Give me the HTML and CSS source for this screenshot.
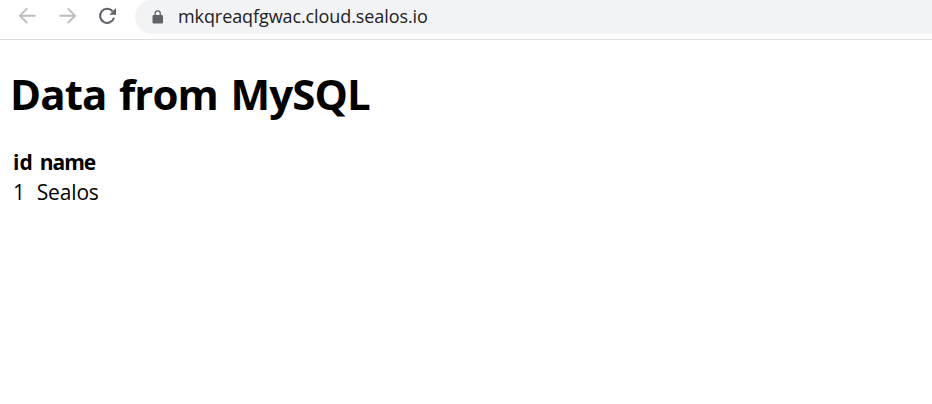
FILE: index.html
```html
<!DOCTYPE html>
<html lang="en">
<head>
<meta charset="utf-8">
<title>Data from MySQL</title>
<link rel="stylesheet" href="styles.css">
</head>
<body>
<header class="toolbar">
  <nav class="nav">
    <svg class="icon off" viewBox="0 0 20 20"><path d="M18.500 9.700H3M10.300 2.300L2.900 9.700l7.400 7.400"/></svg>
    <svg class="icon off" viewBox="0 0 20 20"><path d="M2.500 9.700H18M10.700 2.300l7.400 7.400-7.400 7.400"/></svg>
    <svg class="icon reload" viewBox="0 0 20 20"><path class="arc" d="M15.600 5.200A7.100 7.100 0 1 0 17 11.800"/><path class="tip" d="M19 2v6.700h-6.700z"/></svg>
  </nav>
  <div class="address">
    <svg class="lock" viewBox="0 0 12 14"><path fill-rule="evenodd" d="M2.500 5V3.500a3.200 3.200 0 0 1 6.400 0V5h.9a1.200 1.200 0 0 1 1.200 1.200v6.100a1.200 1.200 0 0 1-1.200 1.200H1.700a1.200 1.200 0 0 1-1.200-1.200V6.200A1.200 1.200 0 0 1 1.700 5zM3.800 5h3.800V3.500a1.900 1.900 0 0 0-3.800 0z"/></svg>
    <span class="url">mkqreaqfgwac.cloud.sealos.io</span>
  </div>
</header>
<main class="page">
  <h1 class="title">Data from MySQL</h1>
  <table class="data">
    <tr><th>id</th><th class="name">name</th></tr>
    <tr><td>1</td><td class="value">Sealos</td></tr>
  </table>
</main>
</body>
</html>
```
FILE: styles.css
```css
body { margin: 0; background: #fff; color: #000; font-family: "Open Sans", "Noto Sans", sans-serif; }
.toolbar { box-sizing: border-box; height: 40px; border-bottom: 1px solid #dcdde0; display: flex; padding-left: 17px; }
.nav { display: flex; gap: 20px; width: 118px; padding-top: 6px; }
.icon { width: 20px; height: 20px; flex: none; }
.off { fill: none; stroke: #babcbe; stroke-width: 1.9; }
.arc { fill: none; stroke: #5f6368; stroke-width: 2.1; }
.tip { fill: #5f6368; }
.address { flex: 1; height: 34px; background: #f1f3f4; border-radius: 17px 0 0 17px; display: flex; }
.lock { width: 12px; height: 14px; margin: 10px 14px 0 17px; fill: #5f6368; }
.url { font-size: 18px; line-height: 32px; letter-spacing: -0.09px; color: #202124; white-space: nowrap; }
.page { padding: 0 11px; }
.title { margin: 26px 0 25px -1px; font-size: 42px; line-height: 56px; letter-spacing: -0.9px; word-spacing: 2.5px; font-weight: 700; white-space: nowrap; }
.data { border-collapse: collapse; font-size: 21px; line-height: 30px; }
.data th, .data td { padding: 0 2px; text-align: left; white-space: nowrap; }
.data .name { padding-left: 5px; letter-spacing: -1px; }
.data .value { letter-spacing: -0.15px; }
```
